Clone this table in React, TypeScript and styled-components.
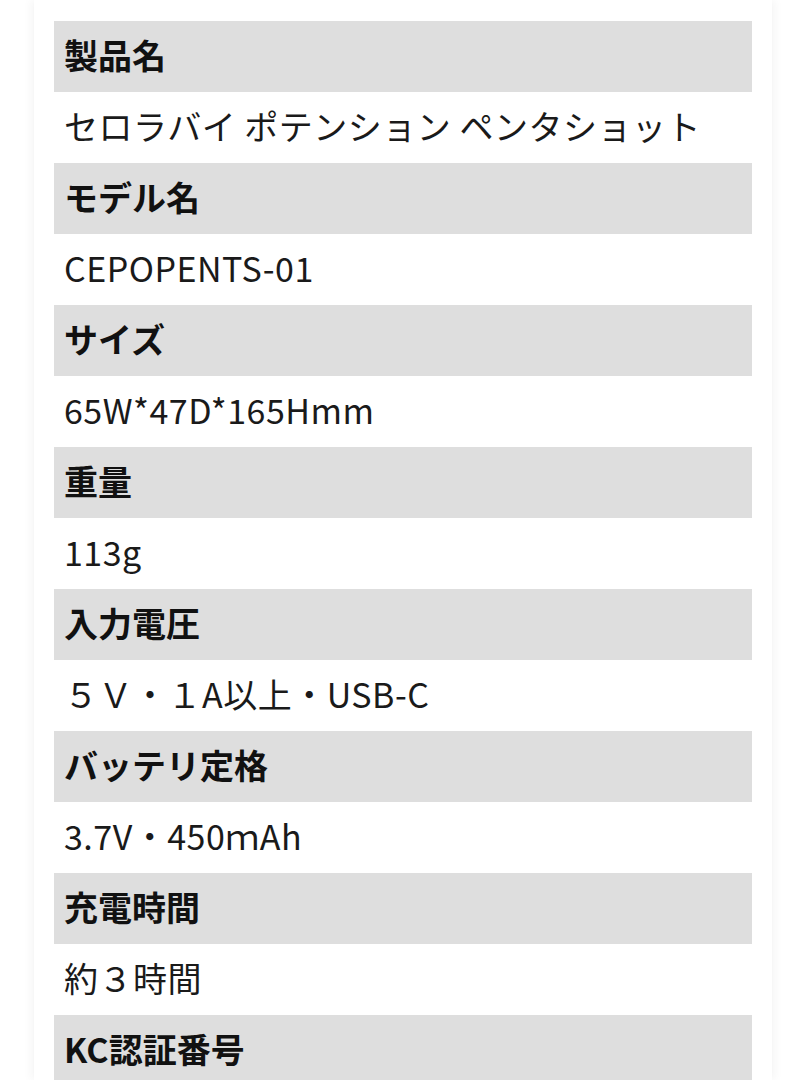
import styled, { createGlobalStyle } from "styled-components";

const GlobalStyle = createGlobalStyle`
  body {
    margin: 0;
    background: #ffffff;
    font-family: "Noto Sans CJK JP", "Noto Sans", sans-serif;
  }
`;

const Page = styled.div`
  width: 800px;
  height: 1080px;
  overflow: hidden;
  padding: 0 28px 0 34px;
  box-sizing: border-box;
`;

const Panel = styled.section`
  background: #ffffff;
  padding: 21px 20px 0;
  height: 100%;
  box-sizing: border-box;
  box-shadow: -4px 0 8px rgba(0, 0, 0, 0.035), 4px 0 8px rgba(0, 0, 0, 0.035);
`;

const SpecList = styled.dl`
  margin: 0;
  display: flex;
  flex-direction: column;
`;

const Label = styled.dt`
  height: 71px;
  box-sizing: border-box;
  display: flex;
  align-items: center;
  padding: 0 0 4px 10px;
  background: #dedede;
  color: #111111;
  font-size: 34px;
  font-weight: 700;
`;

const Value = styled.dd`
  margin: 0;
  height: 71px;
  box-sizing: border-box;
  display: flex;
  align-items: center;
  padding: 0 0 4px 10px;
  color: #1a1a1a;
  font-size: 34px;
  font-weight: 400;
  letter-spacing: 0.5px;
  white-space: pre;
`;

const specs = [
  { label: "製品名", value: "セロラバイ ポテンション ペンタショット" },
  { label: "モデル名", value: "CEPOPENTS-01" },
  { label: "サイズ", value: "65W*47D*165Hmm" },
  { label: "重量", value: "113g" },
  { label: "入力電圧", value: "\uFF15\uFF36・\uFF11A以上・USB-C" },
  { label: "バッテリ定格", value: "3.7V・450\uFF4DAh" },
  { label: "充電時間", value: "約\uFF13時間" },
  { label: "KC認証番号", value: "" },
];

const App = () => {
  return (
    <>
      <GlobalStyle />
      <Page>
        <Panel>
          <SpecList>
            {specs.map((spec) => (
              <div key={spec.label}>
                <Label>{spec.label}</Label>
                {spec.value && <Value>{spec.value}</Value>}
              </div>
            ))}
          </SpecList>
        </Panel>
      </Page>
    </>
  );
};

export default App;
